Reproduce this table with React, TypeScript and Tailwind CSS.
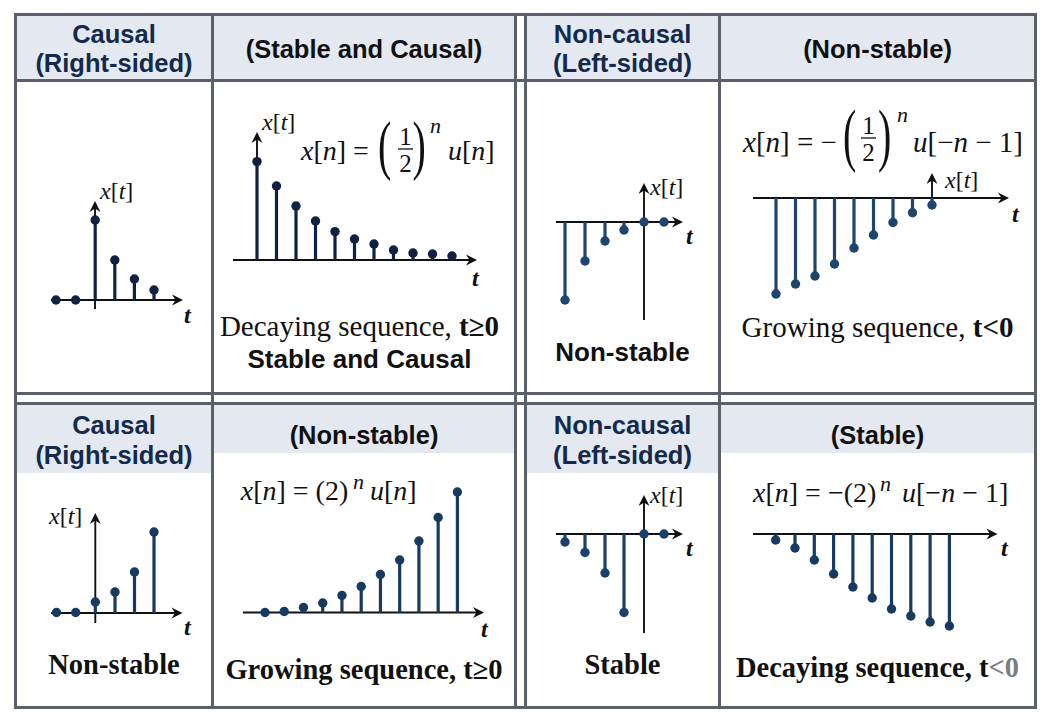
import React from "react";

type Pt = [number, number];
const SVGF = "block font-['Liberation_Serif','Times_New_Roman',serif]";

function Arrow({ x, y, dir }: { x: number; y: number; dir: "r" | "u" }) {
  const d =
    dir === "r"
      ? `M${x} ${y} L${x - 11} ${y - 5.5} L${x - 7.5} ${y} L${x - 11} ${y + 5.5} Z`
      : `M${x} ${y} L${x - 5.5} ${y + 11} L${x} ${y + 7.5} L${x + 5.5} ${y + 11} Z`;
  return <path d={d} fill="#111" />;
}

function XAxis({ y, x0, x1 }: { y: number; x0: number; x1: number }) {
  return (
    <g>
      <line x1={x0} y1={y} x2={x1 - 6} y2={y} stroke="#111" strokeWidth={1.9} />
      <Arrow x={x1} y={y} dir="r" />
    </g>
  );
}

function YAxis({ x, y0, y1 }: { x: number; y0: number; y1: number }) {
  return (
    <g>
      <line x1={x} y1={y0} x2={x} y2={y1 + 6} stroke="#111" strokeWidth={1.9} />
      <Arrow x={x} y={y1} dir="u" />
    </g>
  );
}

function Stems({ axisY, pts, color }: { axisY: number; pts: Pt[]; color: string }) {
  return (
    <g>
      {pts.map(([x, y], i) => (
        <g key={i}>
          {Math.abs(y - axisY) > 1 && (
            <line x1={x} y1={axisY} x2={x} y2={y} stroke={color} strokeWidth={3.2} />
          )}
          <circle cx={x} cy={y} r={4.7} fill={color} />
        </g>
      ))}
    </g>
  );
}

function XtLabel({ x, y }: { x: number; y: number }) {
  return (
    <text x={x} y={y} fontSize={24} fill="#111">
      <tspan fontStyle="italic">x</tspan>[<tspan fontStyle="italic">t</tspan>]
    </text>
  );
}

function TLabel({ x, y }: { x: number; y: number }) {
  return (
    <text x={x} y={y} fontSize={24} fontStyle="italic" fontWeight={700} fill="#111">
      t
    </text>
  );
}

function BigParen({ x, y, s, ch }: { x: number; y: number; s: number; ch: string }) {
  return (
    <text transform={`translate(${x} ${y}) scale(1 ${s})`} fontSize={40} fill="#111">
      {ch}
    </text>
  );
}

function Half({ cx, y1, bar, y2 }: { cx: number; y1: number; bar: number; y2: number }) {
  return (
    <g>
      <text x={cx} y={y1} fontSize={25} textAnchor="middle" fill="#111">
        1
      </text>
      <line x1={cx - 7.5} y1={bar} x2={cx + 7.5} y2={bar} stroke="#111" strokeWidth={1.3} />
      <text x={cx} y={y2} fontSize={25} textAnchor="middle" fill="#111">
        2
      </text>
    </g>
  );
}

const range = (n: number, x0: number, dx: number) => Array.from({ length: n }, (_, k) => x0 + dx * k);
const zip = (xs: number[], ys: number[]): Pt[] => xs.map((x, i) => [x, ys[i]]);

const C1 = "#10223f";
const C2 = "#1e456f";
const C3 = "#163a60";
const C4 = "#1b416b";

const hdrTwo =
  "bg-[#e4e9f1] pt-[4px] text-center font-['Liberation_Sans',Arial,sans-serif] font-bold text-[25.5px] leading-[29px] text-[#132a4c]";
const hdrOne =
  "bg-[#e4e9f1] pt-[3px] flex items-center justify-center font-['Liberation_Sans',Arial,sans-serif] font-bold text-[25.5px] leading-[30px] text-[#111]";
const hdrTwoB =
  "bg-[#e4e9f1] h-[68px] pt-[5px] text-center font-['Liberation_Sans',Arial,sans-serif] font-bold text-[25.5px] leading-[30px] text-[#132a4c]";
const hdrOneB =
  "bg-[#e4e9f1] h-[48px] pt-[15px] text-center font-['Liberation_Sans',Arial,sans-serif] font-bold text-[25.5px] leading-[30px] text-[#111]";
const capSerifReg = "font-['Liberation_Serif','Times_New_Roman',serif] text-[29px] leading-[33px] text-center text-[#111]";
const capSerifBold = "font-['Liberation_Serif','Times_New_Roman',serif] font-bold text-[28.5px] leading-[33px] text-center text-[#111]";
const capSans = "font-['Liberation_Sans',Arial,sans-serif] font-bold text-[26px] leading-[33px] text-center text-[#111]";

export default function App() {
  return (
    <div className="w-[1051px] h-[718px] bg-white pt-[13px] pl-[14px]">
      <div className="w-[1023px] h-[696px] border-[3px] border-[#596069] bg-[#596069] grid grid-cols-[194px_300px_7px_191px_313px] grid-rows-[63px_310px_7px_301px] gap-[3px]">
        {/* Row 1 headers */}
        <div className={hdrTwo}>
          <div>Causal</div>
          <div>(Right-sided)</div>
        </div>
        <div className={hdrOne}>(Stable and Causal)</div>
        <div className="bg-white" />
        <div className={hdrTwo}>
          <div>Non-causal</div>
          <div>(Left-sided)</div>
        </div>
        <div className={hdrOne}>(Non-stable)</div>

        {/* Row 1 bodies */}
        <div className="bg-white">
          <svg width={194} height={310} className={SVGF}>
            <XAxis y={218} x0={34} x1={166} />
            <YAxis x={78} y0={227} y1={119} />
            <Stems
              axisY={218}
              color={C1}
              pts={zip([39, 58.6, 78.2, 97.8, 117.4, 137], [218, 218, 138, 178, 197, 208])}
            />
            <XtLabel x={83} y={117} />
            <TLabel x={167} y={241} />
          </svg>
        </div>
        <div className="bg-white flex flex-col">
          <svg width={300} height={228} className={SVGF}>
            <XAxis y={178} x0={19} x1={263} />
            <YAxis x={43} y0={178} y1={50} />
            <Stems
              axisY={178}
              color={C1}
              pts={zip(range(11, 43, 19.5), [79.6, 104, 124, 139, 149.6, 157, 162, 168, 171, 172, 174])}
            />
            <XtLabel x={48} y={48} />
            <TLabel x={258} y={204} />
            <text x={87} y={78} fontSize={28} fill="#111">
              <tspan fontStyle="italic">x</tspan>[<tspan fontStyle="italic">n</tspan>] =
            </text>
            <BigParen x={164} y={85.4} s={1.64} ch="(" />
            <Half cx={191.5} y1={63} bar={67} y2={90} />
            <BigParen x={198.6} y={85.4} s={1.64} ch=")" />
            <text x={216} y={51} fontSize={22} fontStyle="italic" fill="#111">
              n
            </text>
            <text x={234} y={78} fontSize={28} fill="#111">
              <tspan fontStyle="italic">u</tspan>[<tspan fontStyle="italic">n</tspan>]
            </text>
          </svg>
          <div className={capSerifReg + " pr-[9px]"}>
            Decaying sequence, <b>t≥0</b>
          </div>
          <div className={capSans + " pr-[9px]"}>Stable and Causal</div>
        </div>
        <div className="bg-white" />
        <div className="bg-white flex flex-col">
          <svg width={191} height={254} className={SVGF}>
            <XAxis y={140} x0={29} x1={156} />
            <YAxis x={117} y0={238} y1={101} />
            <Stems
              axisY={140}
              color={C2}
              pts={zip([38, 58, 78, 97, 117, 137], [218, 179, 159, 148, 140, 140])}
            />
            <XtLabel x={123} y={113} />
            <TLabel x={159} y={162} />
          </svg>
          <div className={capSans}>Non-stable</div>
        </div>
        <div className="bg-white flex flex-col">
          <svg width={313} height={229} className={SVGF}>
            <text x={22} y={70} fontSize={29} fill="#111">
              <tspan fontStyle="italic">x</tspan>[<tspan fontStyle="italic">n</tspan>] = −
            </text>
            <BigParen x={122} y={75.5} s={1.76} ch="(" />
            <Half cx={147.5} y1={52} bar={56} y2={79} />
            <BigParen x={157} y={75.5} s={1.76} ch=")" />
            <text x={176} y={40} fontSize={22} fontStyle="italic" fill="#111">
              n
            </text>
            <text x={192} y={70} fontSize={29} fill="#111">
              <tspan fontStyle="italic">u</tspan>[−<tspan fontStyle="italic">n</tspan> − 1]
            </text>
            <XAxis y={116} x0={32} x1={288} />
            <YAxis x={211} y0={116} y1={91} />
            <Stems
              axisY={116}
              color={C2}
              pts={zip(range(9, 55, 19.5), [212, 202, 194, 182, 166, 153, 140.5, 130.7, 123])}
            />
            <XtLabel x={224} y={106} />
            <TLabel x={291} y={140} />
          </svg>
          <div className={capSerifReg}>
            Growing sequence, <b>t&lt;0</b>
          </div>
        </div>

        {/* Spacer row */}
        <div className="bg-white" />
        <div className="bg-white" />
        <div className="bg-white" />
        <div className="bg-white" />
        <div className="bg-white" />

        {/* Row 2 */}
        <div className="bg-white flex flex-col">
          <div className={hdrTwoB}>
            <div>Causal</div>
            <div>(Right-sided)</div>
          </div>
          <svg width={194} height={175} className={SVGF}>
            <XAxis y={140} x0={34} x1={165.5} />
            <YAxis x={78.3} y0={150} y1={40} />
            <Stems
              axisY={140}
              color={C3}
              pts={zip([39.5, 58.7, 78.3, 98, 117.5, 137], [139.5, 139.5, 129, 119, 99, 59])}
            />
            <XtLabel x={32} y={50.5} />
            <TLabel x={167} y={162} />
          </svg>
          <div className={capSerifBold}>Non-stable</div>
        </div>
        <div className="bg-white flex flex-col">
          <div className={hdrOneB}>(Non-stable)</div>
          <svg width={300} height={200} className={SVGF}>
            <text x={26.7} y={47} fontSize={28} fill="#111">
              <tspan fontStyle="italic">x</tspan>[<tspan fontStyle="italic">n</tspan>] = (2)
            </text>
            <text x={139} y={36} fontSize={22} fontStyle="italic" fill="#111">
              n
            </text>
            <text x={156} y={47} fontSize={28} fill="#111">
              <tspan fontStyle="italic">u</tspan>[<tspan fontStyle="italic">n</tspan>]
            </text>
            <XAxis y={159.5} x0={29} x1={270} />
            <Stems
              axisY={159.5}
              color={C3}
              pts={zip(range(11, 51, 19.24), [159.5, 158.5, 154.5, 150, 142.5, 133.5, 121.5, 107, 88, 64.5, 39])}
            />
            <TLabel x={267} y={184} />
          </svg>
          <div className={capSerifBold}>Growing sequence, t≥0</div>
        </div>
        <div className="bg-white" />
        <div className="bg-white flex flex-col">
          <div className={hdrTwoB}>
            <div>Non-causal</div>
            <div>(Left-sided)</div>
          </div>
          <svg width={191} height={175} className={SVGF}>
            <XAxis y={61} x0={29} x1={156} />
            <YAxis x={117} y0={160} y1={22} />
            <Stems
              axisY={61}
              color={C4}
              pts={zip([38, 58, 78, 97, 117, 137], [69, 79.5, 100, 139.5, 61, 61])}
            />
            <XtLabel x={123} y={30} />
            <TLabel x={159} y={83} />
          </svg>
          <div className={capSerifBold}>Stable</div>
        </div>
        <div className="bg-white flex flex-col">
          <div className={hdrOneB}>(Stable)</div>
          <svg width={313} height={198} className={SVGF}>
            <text x={32} y={49} fontSize={28} fill="#111">
              <tspan fontStyle="italic">x</tspan>[<tspan fontStyle="italic">n</tspan>] = −(2)
            </text>
            <text x={159} y={38} fontSize={22} fontStyle="italic" fill="#111">
              n
            </text>
            <text x={181} y={49} fontSize={28} fill="#111">
              <tspan fontStyle="italic">u</tspan>[−<tspan fontStyle="italic">n</tspan> − 1]
            </text>
            <XAxis y={81} x0={32} x1={276.5} />
            <Stems
              axisY={81}
              color={C3}
              pts={zip(range(10, 54.7, 19.3), [87, 95, 107, 121, 134, 145, 156, 163, 169, 173])}
            />
            <TLabel x={280} y={103} />
          </svg>
          <div className={capSerifBold}>
            Decaying sequence, t<span className="text-[#7d7d7d]">&lt;0</span>
          </div>
        </div>
      </div>
    </div>
  );
}
